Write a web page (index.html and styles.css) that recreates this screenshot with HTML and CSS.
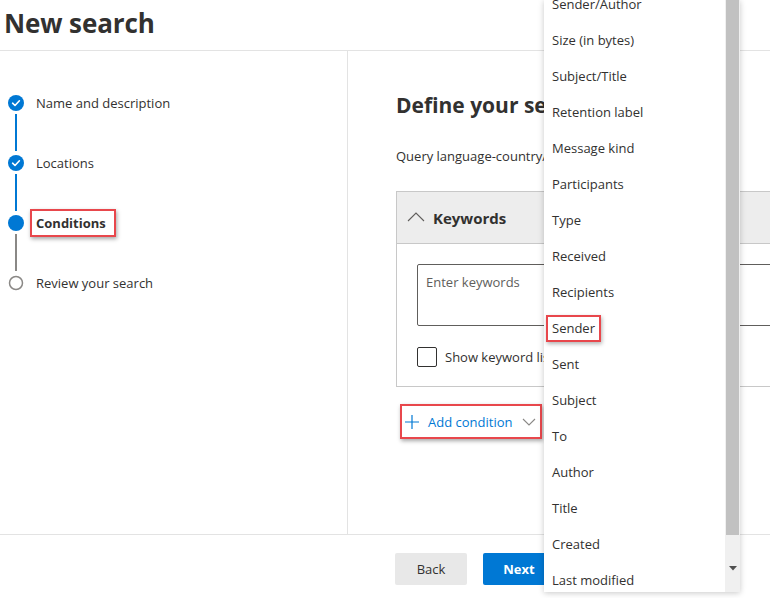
FILE: index.html
```html
<!DOCTYPE html>
<html>
<head>
<meta charset="utf-8">
<link rel="stylesheet" href="styles.css">
</head>
<body>
<div class="page">
  <header class="header"><h1 class="title">New search</h1></header>
  <div class="main">
    <nav class="steps">
      <div class="step done">
        <div class="rail"><span class="dot"><svg viewBox="0 0 16 16" width="16" height="16"><circle cx="8" cy="8" r="8" fill="#0078d4"/><path d="M4.6 8.2 L7 10.5 L11.4 5.8" fill="none" stroke="#fff" stroke-width="1.6" stroke-linecap="round" stroke-linejoin="round"/></svg></span><span class="line blue"></span></div>
        <div class="label">Name and description</div>
      </div>
      <div class="step done">
        <div class="rail"><span class="dot"><svg viewBox="0 0 16 16" width="16" height="16"><circle cx="8" cy="8" r="8" fill="#0078d4"/><path d="M4.6 8.2 L7 10.5 L11.4 5.8" fill="none" stroke="#fff" stroke-width="1.6" stroke-linecap="round" stroke-linejoin="round"/></svg></span><span class="line blue"></span></div>
        <div class="label">Locations</div>
      </div>
      <div class="step current">
        <div class="rail"><span class="dot"><svg viewBox="0 0 16 16" width="16" height="16"><circle cx="8" cy="8" r="8" fill="#0078d4"/></svg></span><span class="line grey"></span></div>
        <div class="label"><span class="hl">Conditions</span></div>
      </div>
      <div class="step todo">
        <div class="rail"><span class="dot"><svg viewBox="0 0 16 16" width="16" height="16"><circle cx="8" cy="8" r="6.5" fill="#fff" stroke="#8a8886" stroke-width="1.5"/></svg></span></div>
        <div class="label">Review your search</div>
      </div>
    </nav>
    <section class="content">
      <h2 class="heading">Define your search conditions</h2>
      <p class="desc">Query language-country/region</p>
      <div class="card">
        <div class="card-head">
          <svg class="chev" viewBox="0 0 18 10" width="18" height="10"><path d="M1 9 L9 1 L17 9" fill="none" stroke="#605e5c" stroke-width="1.1"/></svg>
          <span class="card-title">Keywords</span>
        </div>
        <div class="card-body">
          <div class="textarea">Enter keywords</div>
          <div class="check-row"><span class="checkbox"></span><span>Show keyword list</span></div>
        </div>
      </div>
      <div class="add-row">
        <span class="add">
          <svg viewBox="0 0 16 16" width="16" height="16"><path d="M8 1 V15 M1 8 H15" stroke="#0078d4" stroke-width="1.2" fill="none"/></svg>
          <span class="add-text">Add condition</span>
          <svg viewBox="0 0 14 8" width="14" height="8"><path d="M1 1 L7 7 L13 1" fill="none" stroke="#8a8886" stroke-width="1.1"/></svg>
        </span>
      </div>
    </section>
  </div>
  <footer class="footer">
    <button class="btn back">Back</button>
    <button class="btn next">Next</button>
  </footer>

  <div class="menu">
    <ul class="items">
      <li>Sender/Author</li>
      <li>Size (in bytes)</li>
      <li>Subject/Title</li>
      <li>Retention label</li>
      <li>Message kind</li>
      <li>Participants</li>
      <li>Type</li>
      <li>Received</li>
      <li>Recipients</li>
      <li><span class="hl3">Sender</span></li>
      <li>Sent</li>
      <li>Subject</li>
      <li>To</li>
      <li>Author</li>
      <li>Title</li>
      <li>Created</li>
      <li>Last modified</li>
    </ul>
    <div class="scrollbar">
      <div class="thumb"></div>
      <div class="arrow"><svg viewBox="0 0 8 5" width="8" height="5"><path d="M0 0 H8 L4 4.5 Z" fill="#505050"/></svg></div>
    </div>
  </div>
</div>
</body>
</html>
```

FILE: styles.css
```css
* { box-sizing: border-box; }
html, body { margin: 0; padding: 0; }
body {
  width: 770px;
  height: 598px;
  overflow: hidden;
  background: #fff;
  font-family: "Open Sans", "Noto Sans", sans-serif;
  color: #323130;
  font-size: 13px;
}
.page { position: relative; width: 770px; height: 598px; overflow: hidden; }

.header { height: 51px; border-bottom: 1px solid #e3e3e3; padding-left: 4px; }
.title { margin: 0; font-size: 26px; font-weight: 700; line-height: 46px; color: #323130; letter-spacing: -0.1px; }

.main { display: flex; height: 484px; border-bottom: 1px solid #e3e3e3; }
.steps { width: 348px; flex: none; border-right: 1px solid #e3e3e3; padding: 44px 0 0 8px; }
.step { display: flex; height: 60px; }
.rail { width: 16px; display: flex; flex-direction: column; align-items: center; }
.dot { width: 16px; height: 16px; flex: none; display: block; }
.dot svg { display: block; }
.line { width: 2px; flex: 1; margin: 3px 0 4px; }
.line.blue { background: #0078d4; }
.line.grey { background: #8a8886; }
.label { margin-left: 12px; line-height: 16px; font-size: 13px; color: #323130; white-space: nowrap; }
.step.current .label { font-weight: 700; }
.hl { display: inline-block; border: 2px solid #e8474c; box-shadow: 1px 2px 4px rgba(0,0,0,0.35); padding: 4px 8px 4px 4px; margin: -8px 0 0 -6px; line-height: 16px; }

.content { flex: 1; padding-left: 48px; min-width: 0; }
.heading { margin: 41px 0 0; font-size: 21px; font-weight: 700; line-height: 26px; white-space: nowrap; color: #323130; }
.desc { margin: 29px 0 0; font-size: 13px; line-height: 18px; white-space: nowrap; }
.card { margin-top: 26px; width: 420px; border: 1px solid #c8c8c8; }
.card-head { height: 52px; background: #ededed; border-bottom: 1px solid #c8c8c8; display: flex; align-items: center; padding-left: 10px; }
.chev { display: block; margin-right: 8px; margin-top: -1px; }
.card-title { font-size: 15px; font-weight: 700; }
.card-body { padding: 20px 0 19px 20px; }
.textarea { height: 62px; border: 1px solid #605e5c; border-radius: 2px; padding: 7px 8px; color: #605e5c; font-size: 13px; line-height: 20px; }
.check-row { display: flex; align-items: center; margin-top: 21px; white-space: nowrap; font-size: 13px; }
.checkbox { width: 20px; height: 20px; border: 1px solid #323130; border-radius: 2px; margin-right: 8px; flex: none; }

.add-row { margin-top: 17px; padding-left: 5px; }
.add { display: inline-flex; align-items: center; height: 35px; border: 2px solid #e8474c; box-shadow: 1px 2px 4px rgba(0,0,0,0.35); padding: 0 4px 0 2px; margin-left: -1px; }
.add svg { display: block; }
.add-text { color: #0078d4; font-size: 13px; margin: 0 10px 0 8px; }

.footer { height: 64px; display: flex; align-items: flex-start; padding: 18px 0 0 395px; gap: 16px; }
.btn { height: 32px; border: none; border-radius: 2px; font-family: inherit; font-size: 13px; padding: 0; }
.back { width: 72px; background: #e8e8e8; color: #323130; }
.next { width: 72px; background: #0078d4; color: #fff; font-weight: 700; }

.menu {
  position: absolute;
  left: 544px;
  top: 0;
  width: 196px;
  height: 592px;
  background: #fff;
  box-shadow: 0 1px 6px rgba(0,0,0,0.22);
  overflow: hidden;
  display: flex;
}
.items { list-style: none; margin: -14px 0 0; padding: 0; flex: 1; }
.items li { height: 36px; line-height: 36px; padding-left: 8px; font-size: 13px; color: #323130; white-space: nowrap; }
.hl3 { display: inline-block; border: 2px solid #e8474c; box-shadow: 1px 2px 4px rgba(0,0,0,0.3); line-height: 23px; padding: 0 4px; margin-left: -6px; vertical-align: middle; margin-top: -3px; }
.scrollbar { width: 15px; flex: none; background: #f0f0f0; display: flex; flex-direction: column; align-items: center; }
.thumb { width: 13px; height: 535px; background: #c1c1c1; }
.arrow { flex: 1; display: flex; align-items: center; justify-content: center; padding-top: 10px; }
.arrow svg { display: block; }
```
